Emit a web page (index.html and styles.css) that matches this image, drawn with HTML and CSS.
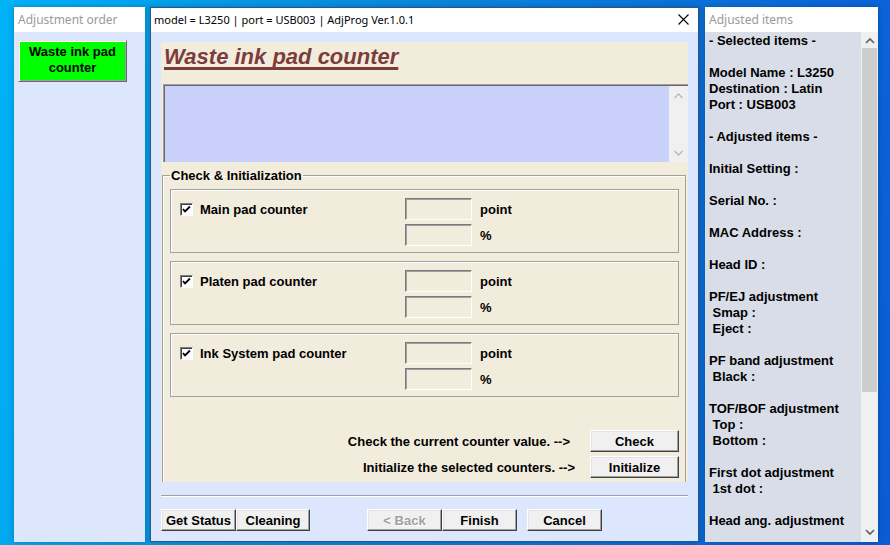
FILE: index.html
```html
<!DOCTYPE html>
<html>

<head>
    <title>AdjProg</title>
    <link rel="stylesheet" href="styles.css">
</head>

<body>
    <div class="desktop">
        <!-- left: adjustment order -->
        <div class="win win-left">
            <div class="win-title">Adjustment order</div>
            <div class="win-body">
                <div class="order-btn">Waste ink pad<br>counter</div>
            </div>
        </div>

        <!-- middle: main dialog -->
        <div class="win win-main">
            <div class="win-title">
                <span>model = L3250 | port = USB003 | AdjProg Ver.1.0.1</span>
                <svg class="close" width="11" height="11" viewBox="0 0 11 11">
                    <path d="M0.5 0.5 L10.5 10.5 M10.5 0.5 L0.5 10.5" stroke="#000" stroke-width="1.1" fill="none" />
                </svg>
            </div>
            <div class="win-body">
                <div class="panel">
                    <div class="heading"><span>Waste ink pad counter</span></div>
                    <div class="memo">
                        <div class="memo-scroll">
                            <svg width="9" height="6" viewBox="0 0 9 6"><polyline points="0.5,5 4.5,1 8.5,5" stroke="#b8b8b8" stroke-width="1.3" fill="none" /></svg>
                            <svg width="9" height="6" viewBox="0 0 9 6"><polyline points="0.5,1 4.5,5 8.5,1" stroke="#b8b8b8" stroke-width="1.3" fill="none" /></svg>
                        </div>
                    </div>

                    <fieldset class="group">
                        <legend>Check &amp; Initialization</legend>

                        <div class="counter">
                            <div class="counter-name"><span class="check"></span>Main pad counter</div>
                            <div class="counter-values">
                                <div class="value-row"><span class="field"></span>point</div>
                                <div class="value-row"><span class="field"></span>%</div>
                            </div>
                        </div>

                        <div class="counter">
                            <div class="counter-name"><span class="check"></span>Platen pad counter</div>
                            <div class="counter-values">
                                <div class="value-row"><span class="field"></span>point</div>
                                <div class="value-row"><span class="field"></span>%</div>
                            </div>
                        </div>

                        <div class="counter">
                            <div class="counter-name"><span class="check"></span>Ink System pad counter</div>
                            <div class="counter-values">
                                <div class="value-row"><span class="field"></span>point</div>
                                <div class="value-row"><span class="field"></span>%</div>
                            </div>
                        </div>

                        <div class="actions">
                            <div class="action-row">
                                <span class="action-text">Check the current counter value. --&gt;</span>
                                <button class="btn btn-action">Check</button>
                            </div>
                            <div class="action-row">
                                <span class="action-text action-text-2">Initialize the selected counters. --&gt;</span>
                                <button class="btn btn-action">Initialize</button>
                            </div>
                        </div>
                    </fieldset>
                </div>

                <div class="separator"></div>

                <div class="bottom-bar">
                    <button class="btn btn-status">Get Status</button>
                    <button class="btn btn-clean">Cleaning</button>
                    <button class="btn btn-nav btn-back" disabled>&lt; Back</button>
                    <button class="btn btn-nav">Finish</button>
                    <button class="btn btn-nav btn-cancel">Cancel</button>
                </div>
            </div>
        </div>

        <!-- right: adjusted items -->
        <div class="win win-right">
            <div class="win-title">Adjusted items</div>
            <div class="win-body">
                <div class="items">- Selected items -

Model Name : L3250
Destination : Latin
Port : USB003

- Adjusted items -

Initial Setting :

Serial No. :

MAC Address :

Head ID :

PF/EJ adjustment
 Smap :
 Eject :

PF band adjustment
 Black :

TOF/BOF adjustment
 Top :
 Bottom :

First dot adjustment
 1st dot :

Head ang. adjustment</div>
                <div class="scrollbar">
                    <svg width="10" height="7" viewBox="0 0 10 7"><polyline points="1,6 5,2 9,6" stroke="#606060" stroke-width="1.6" fill="none" /></svg>
                    <div class="thumb"></div>
                    <svg class="down" width="10" height="7" viewBox="0 0 10 7"><polyline points="1,1 5,5 9,1" stroke="#606060" stroke-width="1.6" fill="none" /></svg>
                </div>
            </div>
        </div>
    </div>
</body>

</html>
```

FILE: styles.css
```css
body {
    margin: 0;
    width: 890px;
    height: 545px;
    overflow: hidden;
    background: linear-gradient(100deg, #00b3f7 0%, #0a8ee0 35%, #0a72da 70%, #0b5cd5 100%);
    font-family: "Liberation Sans", Arial, sans-serif;
    font-size: 13px;
    font-weight: bold;
    color: #000;
}

.desktop {
    display: flex;
    align-items: flex-start;
    padding: 7px 0 0 14px;
}

.win {
    height: 535px;
    display: flex;
    flex-direction: column;
    box-sizing: border-box;
    box-shadow: 0 0 6px rgba(0, 0, 0, 0.25);
}

.win-title {
    flex: none;
    height: 25px;
    line-height: 25px;
    padding-left: 4px;
    background-color: #fff;
    color: #9a9a9a;
    font-family: "Noto Sans", sans-serif;
    font-weight: normal;
    font-size: 12px;
}

.win-body {
    flex: 1;
}

/* left window */
.win-left {
    width: 131px;
}

.win-left .win-body {
    background-color: #dce6fc;
    padding: 8px 0 0 4px;
}

.order-btn {
    width: 109px;
    height: 42px;
    box-sizing: border-box;
    background-color: #00ff00;
    border: 1px solid;
    border-color: #e3e3e3 #696969 #696969 #e3e3e3;
    box-shadow: inset 1px 1px #fff, inset -1px -1px #a0a0a0;
    text-align: center;
    line-height: 16px;
    padding-top: 3px;
}

/* main window */
.win-main {
    width: 549px;
    margin-left: 5px;
    border: 1px solid #28558c;
}

.win-main .win-title {
    height: 24px;
    line-height: 24px;
    padding-left: 3px;
    font-size: 11px;
    color: #000;
    display: flex;
    align-items: center;
    justify-content: space-between;
    padding-right: 9px;
}

.close {
    margin-top: -1px;
}

.win-main .win-body {
    background-color: #dce6fc;
    padding: 10px 10px 0 10px;
}

.panel {
    height: 440px;
    background-color: #f2ecdc;
    overflow: hidden;
}

.heading {
    height: 42px;
    padding: 1px 0 0 3px;
    box-sizing: border-box;
}

.heading span {
    font-size: 22px;
    font-style: italic;
    color: #7c3c3c;
    line-height: 27px;
    text-decoration: underline;
    text-decoration-thickness: 3px;
    text-underline-offset: 3px;
    text-decoration-skip-ink: none;
}

.memo {
    height: 78px;
    margin-left: 2px;
    box-sizing: border-box;
    background-color: #c9d1fa;
    border-top: 1px solid #a0a0a0;
    border-left: 1px solid #a0a0a0;
    box-shadow: inset 1px 1px #696969;
    display: flex;
    justify-content: flex-end;
}

.memo-scroll {
    width: 19px;
    background-color: #f0f0f0;
    margin-top: 1px;
    display: flex;
    flex-direction: column;
    align-items: center;
    justify-content: space-between;
    padding: 7px 0 6px;
}

.group {
    margin: 6px 2px 0 1px;
    padding: 0 6px 10px 7px;
    border: 1px solid #a0a0a0;
    box-shadow: inset 1px 1px #fff;
}

.group legend {
    margin-left: 0;
    padding: 0 1px;
    line-height: 15px;
}

.counter {
    height: 64px;
    box-sizing: border-box;
    margin-top: 6px;
    padding: 8px 0 0 9px;
    border: 1px solid #a0a0a0;
    box-shadow: inset 1px 1px #fff;
    display: flex;
}

.counter + .counter {
    margin-top: 8px;
}

.counter-name {
    width: 225px;
    height: 22px;
    display: flex;
    align-items: center;
}

.check {
    width: 13px;
    height: 13px;
    box-sizing: border-box;
    margin-right: 7px;
    background: #fff url("data:image/svg+xml;utf8,<svg xmlns='http://www.w3.org/2000/svg' width='11' height='11'><polyline points='2,5 4,7.5 9,2.5' stroke='black' stroke-width='1.8' fill='none'/></svg>") no-repeat center;
    border: 1px solid;
    border-color: #808080 #fff #fff #808080;
    box-shadow: inset 1px 1px #404040;
}

.counter-values {
    display: flex;
    flex-direction: column;
    gap: 4px;
}

.value-row {
    height: 22px;
    display: flex;
    align-items: center;
}

.field {
    width: 67px;
    height: 22px;
    box-sizing: border-box;
    margin-right: 8px;
    border: 1px solid;
    border-color: #7a7a7a #fff #fff #7a7a7a;
    box-shadow: inset 1px 1px #a0a0a0;
}

.actions {
    margin-top: 33px;
    display: flex;
    flex-direction: column;
    gap: 4px;
}

.action-row {
    display: flex;
    align-items: center;
    justify-content: flex-end;
}

.action-text {
    margin-right: 20px;
}

.action-text-2 {
    margin-right: 15px;
}

.btn {
    height: 22px;
    box-sizing: border-box;
    padding: 0;
    font-family: "Liberation Sans", Arial, sans-serif;
    font-size: 13px;
    font-weight: bold;
    color: #000;
    background-color: #f0f0f0;
    border: 1px solid;
    border-color: #fff #404040 #404040 #fff;
    box-shadow: inset -1px -1px #a0a0a0, inset 1px 1px #e3e3e3;
}

.btn-action {
    width: 89px;
}

.separator {
    margin-top: 13px;
    height: 1px;
    background-color: #a0a0a0;
    border-bottom: 1px solid #fff;
}

.bottom-bar {
    margin-top: 12px;
    display: flex;
}

.btn-status {
    width: 75px;
}

.btn-clean {
    width: 74px;
}

.btn-nav {
    width: 75px;
}

.btn-back {
    margin-left: 57px;
    color: #a0a0a0;
    text-shadow: 1px 1px #fff;
}

.btn-cancel {
    margin-left: 10px;
}

/* right window */
.win-right {
    width: 173px;
    margin-left: 6px;
}

.win-right .win-body {
    display: flex;
    background-color: #d9dde7;
    overflow: hidden;
}

.items {
    flex: 1;
    white-space: pre;
    line-height: 16px;
    padding: 1px 0 0 4px;
}

.scrollbar {
    width: 17px;
    background-color: #f0f0f0;
    display: flex;
    flex-direction: column;
    align-items: center;
    padding-top: 5px;
}

.thumb {
    width: 15px;
    height: 344px;
    margin-top: 4px;
    background-color: #cdcdcd;
}

.scrollbar .down {
    margin-top: auto;
    margin-bottom: 6px;
}
```
